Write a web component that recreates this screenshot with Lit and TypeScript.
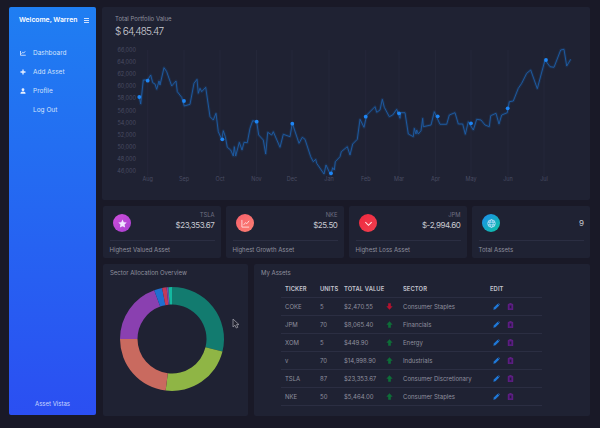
import { LitElement, css, html, svg } from 'lit';
import { customElement } from 'lit/decorators.js';

// chart points in 3x zoom coordinates, left and right half of the plot
const LEFT = [
  118, 290, 122, 312, 130, 240, 143, 240, 152, 225, 158, 248, 165, 252, 170, 268, 177, 243, 180, 255, 192, 203, 200, 215,
  215, 258, 228, 243, 232, 275, 245, 292, 253, 318, 270, 313, 282, 250, 291, 238, 295, 280, 300, 265, 305, 275, 317, 262,
  330, 350, 340, 360, 348, 340, 355, 395, 365, 418, 370, 392, 376, 410, 382, 442, 392, 450, 400, 468, 403, 440, 407, 468,
  418, 427, 426, 450, 432, 427, 442, 428, 450, 385, 458, 362, 470, 365, 476, 405, 490, 420, 497, 462, 503, 397, 515, 405,
  520, 395, 540, 442, 550, 403, 570, 410, 577, 370, 597, 430, 607, 412, 615, 418, 632, 470, 640, 485, 647, 478, 650, 490,
  672, 522, 678, 495, 692, 525, 698, 503, 703, 510, 706, 485, 720, 470, 724, 455, 742, 440, 750, 465,
];
const RIGHT = [
  8, 432, 22, 418, 30, 358, 42, 382, 50, 345, 75, 320, 80, 337, 90, 330, 97, 298, 103, 322, 118, 350, 128, 345, 140, 328,
  150, 355, 152, 338, 165, 338, 175, 402, 190, 410, 193, 385, 198, 402, 200, 390, 205, 402, 213, 392, 218, 355, 220, 380,
  243, 375, 253, 335, 270, 373, 290, 373, 298, 345, 315, 338, 325, 372, 338, 372, 346, 403, 355, 365, 370, 390, 380, 358,
  393, 360, 405, 375, 418, 380, 422, 347, 438, 340, 447, 372, 455, 345, 472, 338, 478, 305, 490, 303, 505, 265, 515, 250,
  530, 220, 542, 210, 562, 266, 585, 180, 600, 200, 612, 202, 632, 150, 642, 148, 650, 198, 662, 178,
];

const toPage = (pts: number[], ox: number) => {
  const out: string[] = [];
  for (let i = 0; i < pts.length; i += 2) {
    out.push(`${(ox + pts[i] / 3).toFixed(1)},${(pts[i + 1] / 3).toFixed(1)}`);
  }
  return out;
};
const LINE = [...toPage(LEFT, 100), ...toPage(RIGHT, 350)].join(' ');

const MARKERS = [
  [139.3, 97], [147.7, 80.7], [184, 101], [222.3, 139.3], [256.7, 121.7], [292.3, 123.7], [331, 173.3],
  [365.7, 116.7], [399, 113.3], [437.7, 116.3], [471, 123.3], [507.7, 108.3], [546, 60],
];
const MONTHS: [string, number][] = [
  ['Aug', 147.7], ['Sep', 184], ['Oct', 220], ['Nov', 256.5], ['Dec', 292], ['Jan', 329],
  ['Feb', 365.7], ['Mar', 399], ['Apr', 435.5], ['May', 471], ['Jun', 508], ['Jul', 544],
];
const TICKS = ['66,000', '64,000', '62,000', '60,000', '58,000', '56,000', '54,000', '52,000', '50,000', '48,000', '46,000'];

const DONUT: [number, number, string][] = [
  [0, 104, '#127b6f'],
  [104, 187, '#8fb545'],
  [187, 270, '#c96a5f'],
  [270, 340, '#8a40b0'],
  [340, 349, '#1f6fd0'],
  [349, 354, '#c23a5a'],
  [354, 356, '#7a4bb0'],
  [356, 360, '#14b8a0'],
];

const ASSETS = [
  ['COKE', '5', '$2,470.55', false, 'Consumer Staples'],
  ['JPM', '70', '$8,065.40', true, 'Financials'],
  ['XOM', '5', '$449.90', true, 'Energy'],
  ['v', '70', '$14,998.90', true, 'Industrials'],
  ['TSLA', '87', '$23,353.67', true, 'Consumer Discretionary'],
  ['NKE', '50', '$5,464.00', true, 'Consumer Staples'],
] as const;

const arc = (a0: number, a1: number) => {
  const cx = 60, cy = 60, R = 52, r = 34.5;
  const p = (rad: number, a: number) => {
    const t = ((a - 90) * Math.PI) / 180;
    return `${(cx + rad * Math.cos(t)).toFixed(2)} ${(cy + rad * Math.sin(t)).toFixed(2)}`;
  };
  const large = a1 - a0 > 180 ? 1 : 0;
  return `M${p(R, a0)}A${R} ${R} 0 ${large} 1 ${p(R, a1)}L${p(r, a1)}A${r} ${r} 0 ${large} 0 ${p(r, a0)}Z`;
};

const chartIcon = html`<svg class="nav-icon" viewBox="0 0 12 12"><path d="M1 2v8.500h10.500M3 7.500l2.500-3 2 1.500L10.500 2.500" fill="none" stroke="currentColor" stroke-width="1.600"/></svg>`;
const plusIcon = html`<svg class="nav-icon" viewBox="0 0 12 12"><path d="M6 1v10M1 6h10" fill="none" stroke="currentColor" stroke-width="2.600"/></svg>`;
const userIcon = html`<svg class="nav-icon" viewBox="0 0 12 12"><circle cx="6" cy="3.500" r="2.800" fill="currentColor"/><path d="M.8 11.500c0-3 2-4.700 5.200-4.700s5.200 1.700 5.200 4.700z" fill="currentColor"/></svg>`;

const pencil = html`<svg class="act" viewBox="0 0 10 10"><path d="M.5 9.500l.7-3 5.400-5.400 2.300 2.300-5.400 5.400z" fill="#1f78d8"/><path d="M7.300.6l.8-.4 1.700 1.700-.4.800z" fill="#1f78d8"/></svg>`;
const trash = html`<svg class="act" viewBox="0 0 10 10"><path d="M1.800 1.800h6.400v8h-6.400z" fill="#4f1a78" stroke="#7a22a0" stroke-width="0.900"/><path d="M3.500.6h3" stroke="#7a22a0" stroke-width="1"/><path d="M4 3.800h2v3.500h-2z" fill="#241a3c"/></svg>`;
const up = html`<svg class="arrow" viewBox="0 0 10 10"><path d="M5 .5L9.500 5.200H6.900V9.500H3.100V5.200H.5z" fill="#0e6e38"/></svg>`;
const down = html`<svg class="arrow" viewBox="0 0 10 10"><path d="M3.100.5H6.900V4.800H9.500L5 9.500.5 4.800H3.100z" fill="#b3122f"/></svg>`;

@customElement('app-root')
export class AppRoot extends LitElement {
  static styles = css`
    :host {
      display: block;
      width: 600px;
      height: 428px;
      overflow: hidden;
      position: relative;
      background: #191927;
      font-family: Inter, 'Liberation Sans', sans-serif;
      color: #a3a4b1;
      font-size: 6.500px;
    }
    .page {
      display: grid;
      grid-template-columns: 87px 488px;
      gap: 6px;
      padding: 7px 0 0 9px;
    }
    .side {
      height: 408px;
      border-radius: 2px;
      background: linear-gradient(180deg, #1f7ef2 0%, #2b4ff2 100%);
      color: #d3e2fb;
      display: flex;
      flex-direction: column;
      font-size: 6.500px;
    }
    .side-head {
      display: flex;
      justify-content: space-between;
      align-items: center;
      padding: 9px 7px 0 10px;
      color: #fff;
      font-size: 6.800px;
      font-weight: 600;
      line-height: 8px;
    }
    .burger {
      box-sizing: border-box;
      width: 5px;
      height: 5px;
      border-top: 1px solid #cfe0ff;
      border-bottom: 1px solid #cfe0ff;
      position: relative;
    }
    .burger::after {
      content: '';
      position: absolute;
      left: 0;
      right: 0;
      top: 1px;
      height: 1px;
      background: #cfe0ff;
    }
    nav {
      margin-top: 19px;
      display: flex;
      flex-direction: column;
    }
    .nav-row {
      display: flex;
      align-items: center;
      height: 19px;
      padding-left: 11px;
      gap: 7px;
    }
    .nav-icon {
      width: 6px;
      height: 6px;
      color: #e8f0ff;
      flex: none;
    }
    .nav-blank {
      width: 6px;
    }
    .brand {
      margin-top: auto;
      text-align: center;
      padding-bottom: 7px;
      line-height: 8px;
      font-size: 6px;
      color: #c9d6ff;
    }
    .main {
      display: flex;
      flex-direction: column;
    }
    .card {
      background: #1f2233;
      border-radius: 2px;
    }
    .chart-card {
      height: 193px;
    }
    .chart-head {
      padding: 8px 13px 0;
      height: 33px;
      box-sizing: border-box;
    }
    .title {
      font-size: 6px;
      line-height: 8px;
      color: #8f909e;
    }
    .total {
      font-size: 10px;
      line-height: 16px;
      letter-spacing: -0.75px;
      font-weight: 300;
      color: #c9cad2;
    }
    .chart {
      display: block;
    }
    .chart text {
      font-size: 5.500px;
      font-family: Inter, 'Liberation Sans', sans-serif;
      fill: #4a4d63;
    }
    .stats {
      margin-top: 6px;
      padding-left: 1px;
      display: grid;
      grid-template-columns: repeat(4, 1fr);
      gap: 5px;
      height: 52px;
    }
    .stat {
      padding: 0 6.500px;
      display: flex;
      flex-direction: column;
    }
    .stat-top {
      display: flex;
      justify-content: space-between;
      align-items: center;
      height: 34px;
      border-bottom: 1px solid #2b2e42;
    }
    .circle {
      width: 18px;
      height: 18px;
      border-radius: 50%;
      margin-left: 3.500px;
      display: flex;
      align-items: center;
      justify-content: center;
      flex: none;
    }
    .circle svg {
      width: 9px;
      height: 9px;
    }
    .stat-val {
      text-align: right;
    }
    .stat-val.with-ticker {
      padding-bottom: 5px;
    }
    .ticker {
      font-size: 5.800px;
      line-height: 8px;
      color: #6f7082;
    }
    .amount {
      font-size: 8px;
      line-height: 12px;
      letter-spacing: -0.4px;
      color: #c9cad2;
    }
    .stat-label {
      font-size: 6px;
      line-height: 17px;
      color: #8f909e;
    }
    .bottom {
      margin-top: 6px;
      padding-left: 1px;
      display: grid;
      grid-template-columns: 145px 336px;
      gap: 6px;
      height: 152px;
    }
    .pie {
      padding: 5px 7px;
    }
    .donut {
      display: block;
      width: 120px;
      height: 120px;
      margin: 2px 0 0 2px;
    }
    .assets {
      padding: 5px 7px;
    }
    table {
      border-collapse: collapse;
      table-layout: fixed;
      width: 261px;
      margin: 2px 0 0 20px;
    }
    th {
      text-align: left;
      font-size: 5.800px;
      font-weight: 600;
      color: #c4c5cf;
      height: 18px;
      padding: 0 0 0 4px;
      letter-spacing: 0.1px;
    }
    td {
      height: 17px;
      padding: 0 0 0 4px;
      border-top: 1px solid #2b2e42;
      font-size: 6px;
      line-height: 7px;
      color: #8f909e;
      white-space: nowrap;
    }
    tr:last-child td {
      border-bottom: 1px solid #2b2e42;
    }
    .arrow {
      display: block;
      width: 7px;
      height: 7px;
      margin-left: -3px;
    }
    .acts {
      display: flex;
      gap: 7px;
      padding-left: 3px;
      align-items: center;
    }
    .act {
      width: 7px;
      height: 7px;
      display: block;
    }
    .cursor {
      position: absolute;
      left: 232px;
      top: 318px;
      width: 8px;
      height: 11px;
    }
  `;

  private stat(ticker: string, amount: string, label: string, bg: string, icon: unknown) {
    return html`<div class="card stat">
      <div class="stat-top">
        <div class="circle" style="background:${bg}">${icon}</div>
        <div class="stat-val ${ticker ? 'with-ticker' : ''}">
          ${ticker ? html`<div class="ticker">${ticker}</div>` : ''}
          <div class="amount">${amount}</div>
        </div>
      </div>
      <div class="stat-label">${label}</div>
    </div>`;
  }

  render() {
    return html`<div class="page">
        <aside class="side">
          <div class="side-head"><span>Welcome, Warren</span><span class="burger"></span></div>
          <nav>
            <div class="nav-row">${chartIcon}<span>Dashboard</span></div>
            <div class="nav-row">${plusIcon}<span>Add Asset</span></div>
            <div class="nav-row">${userIcon}<span>Profile</span></div>
            <div class="nav-row"><span class="nav-blank"></span><span>Log Out</span></div>
          </nav>
          <div class="brand">Asset Vistas</div>
        </aside>
        <div class="main">
          <section class="card chart-card">
            <div class="chart-head">
              <div class="title">Total Portfolio Value</div>
              <div class="total">$ 64,485.47</div>
            </div>
            <svg class="chart" width="488" height="150" viewBox="102 40 488 150">
              ${MONTHS.map(([, x]) => svg`<line x1=${x} x2=${x} y1="50" y2="176" stroke="#2a2d40" stroke-width="0.500"/>`)}
              ${TICKS.map((t, i) => svg`<text x="136" y=${52 + i * 12.1} text-anchor="end">${t}</text>`)}
              ${MONTHS.map(([m, x]) => svg`<text x=${x} y="181" text-anchor="middle">${m}</text>`)}
              <polyline points=${LINE} fill="none" stroke="#1e6fd0" stroke-opacity="0.140" stroke-width="3" stroke-linejoin="round"/>
              <polyline points=${LINE} fill="none" stroke="#1d5ea8" stroke-width="0.900" stroke-linejoin="round"/>
              ${MARKERS.map(([x, y]) => svg`<circle cx=${x} cy=${y} r="1.900" fill="#1e86f5"/>`)}
            </svg>
          </section>
          <div class="stats">
            ${this.stat('TSLA', '$23,353.67', 'Highest Valued Asset', 'linear-gradient(135deg,#cf4fdc,#a83fd0)',
              html`<svg viewBox="0 0 10 10"><path d="M5 .5l1.400 3 3.300.4-2.400 2.300.6 3.300L5 8l-2.900 1.500.6-3.300L.3 3.900l3.300-.4z" fill="#efe6ff"/></svg>`)}
            ${this.stat('NKE', '$25.50', 'Highest Growth Asset', 'linear-gradient(135deg,#f7606c,#fb7f72)',
              html`<svg viewBox="0 0 10 10"><path d="M1 1v8h8M3 6.500l2-2.500 1.500 1.200L9 2" fill="none" stroke="#ffe0e0" stroke-width="1"/></svg>`)}
            ${this.stat('JPM', '$-2,994.60', 'Highest Loss Asset', 'linear-gradient(135deg,#f0283f,#f0404f)',
              html`<svg viewBox="0 0 10 10"><path d="M1.500 3.500L5 7l3.500-3.500" fill="none" stroke="#ffe8e8" stroke-width="1.200"/></svg>`)}
            ${this.stat('', '9', 'Total Assets', 'linear-gradient(135deg,#1e8cf0,#0cc4a0)',
              html`<svg viewBox="0 0 10 10"><g fill="none" stroke="#cfe8ff" stroke-width="0.800"><circle cx="5" cy="5" r="4.200"/><ellipse cx="5" cy="5" rx="1.900" ry="4.200"/><path d="M1 3.500h8M1 6.500h8"/></g></svg>`)}
          </div>
          <div class="bottom">
            <section class="card pie">
              <div class="title">Sector Allocation Overview</div>
              <svg class="donut" viewBox="0 0 120 120">
                ${DONUT.map(([a, b, c]) => svg`<path d=${arc(a, b)} fill=${c}/>`)}
              </svg>
            </section>
            <section class="card assets">
              <div class="title">My Assets</div>
              <table>
                <colgroup>
                  <col style="width:35px" /><col style="width:24px" /><col style="width:45px" />
                  <col style="width:14px" /><col style="width:87px" /><col style="width:56px" />
                </colgroup>
                <thead>
                  <tr><th>TICKER</th><th>UNITS</th><th>TOTAL VALUE</th><th></th><th>SECTOR</th><th>EDIT</th></tr>
                </thead>
                <tbody>
                  ${ASSETS.map(
                    ([t, u, v, rising, s]) => html`<tr>
                      <td>${t}</td><td>${u}</td><td>${v}</td><td>${rising ? up : down}</td><td>${s}</td>
                      <td><div class="acts">${pencil}${trash}</div></td>
                    </tr>`
                  )}
                </tbody>
              </table>
            </section>
          </div>
        </div>
      </div>
      <svg class="cursor" viewBox="0 0 8 11"><path d="M1 1v8l2-1.800L4.300 10l1.500-.7L4.600 6.600H7z" fill="#22232f" stroke="#9a9ba6" stroke-width="0.800"/></svg>`;
  }
}
